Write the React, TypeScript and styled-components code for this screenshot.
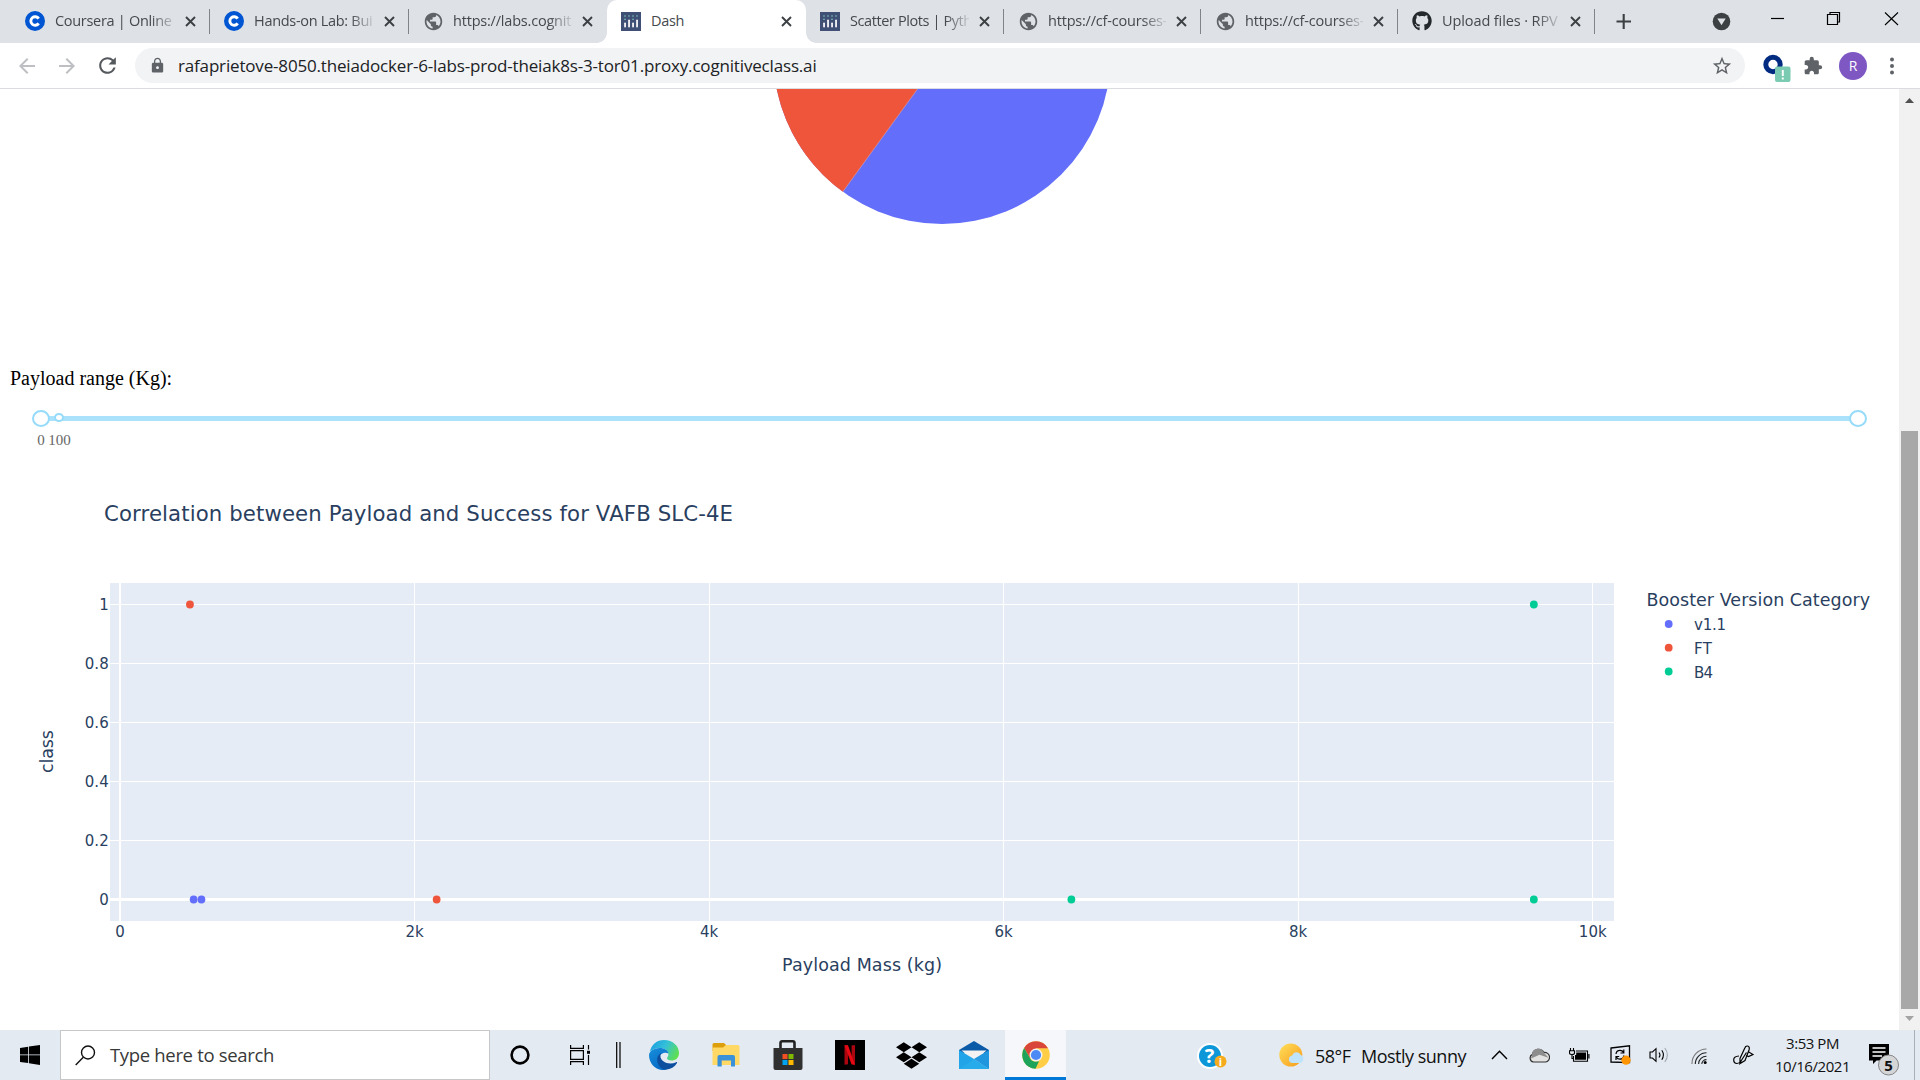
import React from "react";
import styled, { createGlobalStyle } from "styled-components";
import {
  MdArrowBack,
  MdArrowForward,
  MdRefresh,
  MdLock,
  MdStarBorder,
  MdExtension,
  MdPublic,
} from "react-icons/md";
import { FaGithub, FaDropbox } from "react-icons/fa";

const GlobalStyle = createGlobalStyle`
  * { box-sizing: border-box; }
  html, body { margin: 0; padding: 0; overflow: hidden; background: #fff; }
  svg { display: block; flex: none; }
`;

const uiFont = `"Open Sans", "Noto Sans", sans-serif`;
const plotFont = `"DejaVu Sans", Verdana, sans-serif`;

const Screen = styled.div`
  width: 1920px;
  height: 1080px;
  display: flex;
  flex-direction: column;
  overflow: hidden;
  font-family: ${uiFont};
`;

/* ---------- Tab strip ---------- */

const TabStrip = styled.div`
  height: 43px;
  display: flex;
  padding-left: 11px;
  background: #dee1e6;
`;

const Tab = styled.div<{ $width: number; $active?: boolean; $divider?: boolean }>`
  position: relative;
  width: ${(p) => p.$width}px;
  height: 43px;
  display: flex;
  align-items: center;
  padding: 0 14px 1px 14px;
  border-radius: ${(p) => (p.$active ? "10px 10px 0 0" : "0")};
  background: ${(p) => (p.$active ? "#fff" : "transparent")};
  &::before,
  &::after {
    content: "";
    display: ${(p) => (p.$active ? "block" : "none")};
    position: absolute;
    bottom: 0;
    width: 10px;
    height: 10px;
  }
  &::before {
    left: -10px;
    background: radial-gradient(circle at 0 0, transparent 9.5px, #fff 10px);
  }
  &::after {
    right: -10px;
    background: radial-gradient(circle at 100% 0, transparent 9.5px, #fff 10px);
  }
`;

const TabDivider = styled.span`
  position: absolute;
  right: 0;
  top: 9px;
  width: 1px;
  height: 25px;
  background: #808387;
`;

const Favicon = styled.span`
  width: 20px;
  display: flex;
  justify-content: center;
  color: #5f6368;
`;

const TabTitle = styled.span<{ $fade?: boolean; $spacing: number }>`
  flex: 1;
  min-width: 0;
  margin-left: 10px;
  margin-right: 10px;
  white-space: nowrap;
  font-size: 14.5px;
  line-height: 20px;
  letter-spacing: ${(p) => p.$spacing}px;
  color: #45494d;
  mask-image: ${(p) => (p.$fade ? "linear-gradient(to right, #000 80%, transparent 103%)" : "none")};
`;

const WindowControls = styled.div`
  flex: 1;
  height: 43px;
`;

/* ---------- Toolbar ---------- */

const Toolbar = styled.div`
  height: 46px;
  display: flex;
  align-items: center;
  padding-left: 15px;
  background: #fff;
  border-bottom: 1px solid #dadce0;
`;

const NavIcon = styled.span<{ $disabled?: boolean }>`
  width: 40px;
  display: flex;
  color: ${(p) => (p.$disabled ? "#bdbfc2" : "#55585c")};
`;

const Omnibox = styled.div`
  width: 1610px;
  height: 35px;
  border-radius: 18px;
  display: flex;
  align-items: center;
  padding: 0 12px 0 14px;
  background: #f1f3f4;
  color: #5f6368;
`;

const Url = styled.span`
  flex: 1;
  margin-left: 12px;
  font-size: 17px;
  line-height: 24px;
  letter-spacing: -0.17px;
  white-space: nowrap;
  color: #202124;
`;

const Extensions = styled.div`
  flex: 1;
  display: flex;
  align-items: center;
  padding-left: 18px;
  color: #5f6368;
`;

const PuzzleIcon = styled(MdExtension)`
  margin-left: 10px;
`;

const Avatar = styled.span`
  width: 28px;
  height: 28px;
  margin: 0 18px 0 16px;
  border-radius: 50%;
  background: #7e57c2;
  color: #fff;
  font-size: 14px;
  line-height: 28px;
  text-align: center;
`;

/* ---------- Page ---------- */

const Viewport = styled.div`
  height: 941px;
  display: flex;
`;

const Page = styled.main`
  width: 1899px;
  display: flex;
  flex-direction: column;
  overflow: hidden;
  background: #fff;
`;

const PieArea = styled.div`
  height: 276px;
  display: flex;
`;

const RangeLabel = styled.p`
  margin: 0;
  padding-left: 10px;
  height: 51px;
  font-family: "Liberation Serif", "Times New Roman", serif;
  font-size: 20px;
  line-height: 26px;
  color: #000;
`;

const Slider = styled.div`
  position: relative;
  height: 51px;
  margin: 0 41px 0 41px;
`;

const Rail = styled.div`
  position: absolute;
  left: 0;
  right: 0;
  top: 0;
  height: 5px;
  border-radius: 3px;
  background: #abe2fb;
`;

const Handle = styled.span<{ $x: string; $size: number; $top: number }>`
  position: absolute;
  left: ${(p) => p.$x};
  top: ${(p) => p.$top}px;
  width: ${(p) => p.$size}px;
  height: ${(p) => p.$size - 1}px;
  transform: translateX(-50%);
  border: 2px solid #96dbfa;
  border-radius: 50%;
  background: #fff;
`;

const Mark = styled.span<{ $x: number }>`
  position: absolute;
  left: ${(p) => p.$x}px;
  top: 15px;
  transform: translateX(-50%);
  font-family: "Liberation Serif", "Times New Roman", serif;
  font-size: 15px;
  line-height: 18px;
  color: #666;
`;

const Scrollbar = styled.div`
  width: 21px;
  display: flex;
  flex-direction: column;
  align-items: center;
  background: #f1f1f1;
`;

const ScrollArrow = styled.div<{ $down?: boolean }>`
  height: 21px;
  display: flex;
  align-items: center;
  padding-top: 2px;
  transform: ${(p) => (p.$down ? "rotate(180deg)" : "none")};
  color: ${(p) => (p.$down ? "#a3a3a3" : "#505050")};
`;

const ScrollThumb = styled.div`
  width: 17px;
  height: 579px;
  margin-top: 321px;
  background: #a8a8a8;
`;

/* ---------- Taskbar ---------- */

const Taskbar = styled.div`
  height: 50px;
  display: flex;
  background: #e4eaf2;
`;

const Slot = styled.div<{ $width: number; $active?: boolean; $drop?: number }>`
  width: ${(p) => p.$width}px;
  height: 50px;
  display: flex;
  align-items: center;
  justify-content: center;
  padding-top: ${(p) => p.$drop ?? 0}px;
  background: ${(p) => (p.$active ? "#f5f7fa" : "transparent")};
  border-top: ${(p) => (p.$active ? "3px solid #f5f7fa" : "none")};
  border-bottom: ${(p) => (p.$active ? "3px solid #0078d7" : "none")};
`;

const SearchBox = styled.div`
  width: 430px;
  height: 50px;
  display: flex;
  align-items: center;
  padding-left: 14px;
  border: 1px solid #c6c7c8;
  background: #fff;
`;

const SearchText = styled.span`
  margin-left: 14px;
  font-size: 18.5px;
  line-height: 26px;
  letter-spacing: -0.33px;
  color: #383838;
`;

const Weather = styled.div`
  width: 246px;
  display: flex;
  align-items: center;
  padding-left: 51px;
  font-size: 18px;
  letter-spacing: -0.5px;
  white-space: nowrap;
  color: #111;
`;

const Temperature = styled.span`
  width: 46px;
  margin-left: 11px;
  margin-top: 2px;
`;

const Condition = styled.span`
  margin-top: 2px;
`;

const Clock = styled.div`
  width: 83px;
  display: flex;
  flex-direction: column;
  align-items: center;
  padding-top: 2px;
  font-size: 15px;
  line-height: 23px;
  letter-spacing: -0.45px;
  white-space: nowrap;
  color: #111;
`;

const Spacer = styled.div`
  flex: 1;
`;

const PeekEdge = styled.div`
  width: 6px;
  border-left: 1px solid #a9b0ba;
`;

/* ---------- Drawings ---------- */

const CourseraIcon = () => (
  <svg width="20" height="20" viewBox="0 0 20 20">
    <circle cx="10" cy="10" r="10" fill="#0056d2" />
    <path d="M13.7 7.6A4.3 4.3 0 1 0 13.7 12.4" fill="none" stroke="#fff" strokeWidth="2.9" />
  </svg>
);

const PlotlyIcon = () => (
  <svg width="20" height="19" viewBox="0 0 20 19">
    <rect width="20" height="19" fill="#3f4f75" />
    {[4, 8, 12, 16].map((x, i) => (
      <g key={x}>
        <rect x={x - 0.8} y={i % 2 ? 7.5 : 10.5} width="1.7" height={i % 2 ? 8 : 5} rx="0.8" fill="#fff" />
        <circle cx={x} cy="4" r="0.8" fill="#80cfbe" />
        {i % 2 === 0 && <circle cx={x} cy="7.2" r="0.8" fill="#80cfbe" />}
      </g>
    ))}
  </svg>
);

const CloseIcon = () => (
  <svg width="11" height="11" viewBox="0 0 11 11">
    <path d="M1 1L10 10M10 1L1 10" stroke="#3c4043" strokeWidth="1.9" />
  </svg>
);

const ControlsDrawing = () => (
  <svg width="325" height="43" viewBox="1595 0 325 43">
    <path d="M1616.5 21.5H1631M1623.7 14V29" stroke="#3c4043" strokeWidth="2.1" />
    <circle cx="1721.5" cy="21.5" r="8.8" fill="#3c4043" />
    <path d="M1717.3 18.5H1725.7L1721.5 25.2Z" fill="#dee1e6" />
    <path d="M1771 18.5H1784" stroke="#000" strokeWidth="1.2" />
    <path d="M1827.5 14.5H1837.5V24.5H1827.5ZM1830 14.5V12.5H1839.5V22H1837.5" fill="none" stroke="#000" strokeWidth="1.2" />
    <path d="M1885 12.5L1898 25M1898 12.5L1885 25" stroke="#000" strokeWidth="1.1" />
  </svg>
);

const ExtensionBadge = () => (
  <svg width="30" height="32" viewBox="0 0 30 32">
    <circle cx="10" cy="14.5" r="7.2" fill="none" stroke="#002b80" strokeWidth="5" />
    <rect x="12" y="16.5" width="15.5" height="15.5" rx="2" fill="#7bcbb3" />
    <path d="M19.8 20V26M19.8 27.5V29.5" stroke="#fff" strokeWidth="1.9" />
  </svg>
);

const PieDrawing = () => {
  const cx = 942;
  const cy = -33.7;
  const r = 168.7;
  const a = Math.PI / 5;
  const ex = cx - r * Math.sin(a);
  const ey = cy + r * Math.cos(a);
  return (
    <svg width="1899" height="140" viewBox="0 0 1899 140">
      <circle cx={cx} cy={cy} r={r} fill="#636efa" />
      <path d={`M${cx} ${cy}L${ex} ${ey}A${r} ${r} 0 0 1 ${cx} ${cy - r}Z`} fill="#ef553b" />
      <path d={`M${cx} ${cy}L${ex} ${ey}`} stroke="#d6a3b4" strokeWidth="0.6" />
    </svg>
  );
};

type Point = { x: number; y: number; color: string };

const BLUE = "#636efa";
const RED = "#ef553b";
const GREEN = "#00cc96";

const points: Point[] = [
  { x: 500, y: 0, color: BLUE },
  { x: 553, y: 0, color: BLUE },
  { x: 475, y: 1, color: RED },
  { x: 2150, y: 0, color: RED },
  { x: 6460, y: 0, color: GREEN },
  { x: 9600, y: 0, color: GREEN },
  { x: 9600, y: 1, color: GREEN },
];

const legend = [
  { name: "v1.1", color: BLUE, y: 624, w: 32 },
  { name: "FT", color: RED, y: 647.7, w: 18 },
  { name: "B4", color: GREEN, y: 671.5, w: 19 },
];

const px = (v: number) => 120 + (v / 2000) * 294.55;
const py = (v: number) => 899.5 - v * 295;

const PlotText = styled.text`
  font-family: ${plotFont};
  fill: #2a3f5f;
  white-space: pre;
`;

const ScatterPlot = () => (
  <svg width="1899" height="563" viewBox="0 467 1899 563">
    <PlotText x="104" y="521" fontSize="21.25" textLength="629">
      Correlation between Payload and Success for VAFB SLC-4E
    </PlotText>
    <rect x="110" y="583" width="1504" height="338" fill="#e5ecf6" />
    {[2, 4, 6, 8, 10].map((k) => (
      <rect key={k} x={Math.round(px(k * 1000) - 0.5)} y="583" width="1" height="338" fill="#fff" />
    ))}
    {[0.2, 0.4, 0.6, 0.8, 1].map((v) => (
      <rect key={v} x="110" y={Math.round(py(v) - 0.5)} width="1504" height="1" fill="#fff" />
    ))}
    <rect x="119" y="583" width="2" height="338" fill="#fff" />
    <rect x="110" y="898" width="1504" height="3" fill="#fff" />
    {points.map((p) => (
      <circle key={`${p.x}-${p.y}`} cx={px(p.x)} cy={py(p.y)} r="3.9" fill={p.color} />
    ))}
    {[0, 0.2, 0.4, 0.6, 0.8, 1].map((v) => (
      <PlotText key={v} x="108.7" y={py(v) + 5.6} fontSize="15" textAnchor="end">
        {v}
      </PlotText>
    ))}
    {[0, 2, 4, 6, 8, 10].map((k) => (
      <PlotText key={k} x={px(k * 1000)} y="937" fontSize="15" textAnchor="middle">
        {k === 0 ? "0" : `${k}k`}
      </PlotText>
    ))}
    <PlotText x="782" y="971" fontSize="17.5" textLength="160">
      Payload Mass (kg)
    </PlotText>
    <PlotText transform="translate(53 773) rotate(-90)" fontSize="17.5" textLength="43">
      class
    </PlotText>
    <PlotText x="1646.5" y="606" fontSize="17.5" textLength="223.5">
      Booster Version Category
    </PlotText>
    {legend.map((l) => (
      <g key={l.name}>
        <circle cx="1668.7" cy={l.y} r="3.9" fill={l.color} />
        <PlotText x="1694" y={l.y + 6} fontSize="15" textLength={l.w}>
          {l.name}
        </PlotText>
      </g>
    ))}
  </svg>
);

const TriangleUp = () => (
  <svg width="9" height="5" viewBox="0 0 9 5">
    <path d="M0 5L4.5 0L9 5Z" fill="currentColor" />
  </svg>
);

const StartIcon = () => (
  <svg width="20" height="20" viewBox="0 0 20 20">
    <path d="M0 2.9L8.2 1.7V9.4H0ZM9 1.5L20 0V9.4H9ZM0 10.3H8.2V18.1L0 17ZM9 10.3H20V20L9 18.3Z" />
  </svg>
);

const SearchIcon = () => (
  <svg width="21" height="21" viewBox="0 0 21 21" fill="none" stroke="#111" strokeWidth="1.4">
    <circle cx="13" cy="7.5" r="6.5" />
    <path d="M8.3 12.2L0.7 20" />
  </svg>
);

const CortanaIcon = () => (
  <svg width="20" height="20" viewBox="0 0 20 20">
    <circle cx="10" cy="10" r="8.4" fill="none" stroke="#000" strokeWidth="2.6" />
  </svg>
);

const TaskViewIcon = () => (
  <svg width="21" height="20" viewBox="0 0 21 20" fill="none" stroke="#000" strokeWidth="1.2">
    <path d="M0.6 0V3.4H13.4V0M0.6 5.6H13.4V14.4H0.6ZM0.6 20V16.6H13.4V20M18.5 0V4.5M18.5 10V20" />
    <path d="M17 5.8H20V8.8H17Z" fill="#000" stroke="none" />
  </svg>
);

const BarsIcon = () => (
  <svg width="5" height="26" viewBox="0 0 5 26">
    <path d="M0.7 0V26M4 0V26" stroke="#000" strokeWidth="1.2" />
  </svg>
);

const EdgeIcon = () => (
  <svg width="30" height="30" viewBox="0 0 30 30">
    <defs>
      <linearGradient id="edgeTop" x1="0" x2="1" y1="0.2" y2="0.6">
        <stop offset="0" stopColor="#1a9fe0" />
        <stop offset="0.5" stopColor="#35c1d8" />
        <stop offset="1" stopColor="#5fe04f" />
      </linearGradient>
      <linearGradient id="edgeSide" x1="0" x2="0.6" y1="0" y2="1">
        <stop offset="0" stopColor="#1790dc" />
        <stop offset="1" stopColor="#0768c4" />
      </linearGradient>
    </defs>
    <path d="M1 12C2 4.5 8 0 15 0C24 0 30 6 30 13C30 18 26.5 20.5 22.5 20.5C19.5 20.5 18 19.3 18 18.2C18 17 19.4 16.8 19.4 14.2C19.4 10.6 15.5 8 10.7 8C6 8 2.5 9.8 1 12Z" fill="url(#edgeTop)" />
    <path d="M0 15C.5 11 5 8 10.7 8C15.5 8 19.4 10.6 19.4 13.6C17 11.6 11 13 10 18C9 24 13 28.5 18 29.6C8 32 0 24.5 0 15Z" fill="url(#edgeSide)" />
    <path d="M12.5 12.6C9 14.5 7.6 18 8.3 21.5C9.4 26.6 13 29.8 18 29.6C22 29 26 26.5 28 23C28.4 22.3 28 21.8 27.2 22.2C20 25.4 11.4 22 11.4 15.7C11.4 14.4 11.8 13.4 12.5 12.6Z" fill="#0d4f9e" />
  </svg>
);

const FolderIcon = () => (
  <svg width="28" height="24" viewBox="0 0 28 24">
    <path d="M0.5 1.5Q0.5 0 2 0H12L14 2V8H0.5Z" fill="#dd9f0c" />
    <path d="M0.5 4.5H11L14 2H26Q27.5 2 27.5 3.5V22H0.5Z" fill="#ffd865" />
    <path d="M5.5 23.5V14Q5.5 12 7.5 12H21Q23 12 23 14V23.5H19V17.5H9.7V23.5Z" fill="#3a91d8" />
  </svg>
);

const StoreIcon = () => (
  <svg width="30" height="30" viewBox="0 0 30 30">
    <path d="M7.5 8V3Q7.5 1.3 9.2 1.3H19.8Q21.5 1.3 21.5 3V8" fill="none" stroke="#222" strokeWidth="2.6" />
    <path d="M0.5 8H29.5V28Q29.5 30 27.5 30H2.5Q0.5 30 0.5 28Z" fill="#303030" />
    <rect x="9.5" y="14" width="5" height="5" fill="#f25022" />
    <rect x="15.5" y="14" width="5" height="5" fill="#7fba00" />
    <rect x="9.5" y="20" width="5" height="5" fill="#00a4ef" />
    <rect x="15.5" y="20" width="5" height="5" fill="#ffb900" />
  </svg>
);

const NetflixIcon = () => (
  <svg width="30" height="30" viewBox="0 0 30 30">
    <rect width="30" height="30" fill="#000" />
    <path d="M9.5 5.3H13V24.3L9.5 24.7ZM16.6 5.3H20V24.7L16.6 24.3Z" fill="#a90610" />
    <path d="M9.5 5.3H13L20 24.7L16.5 24.3Z" fill="#e50914" />
  </svg>
);

const MailIcon = () => (
  <svg width="30" height="28" viewBox="0 0 30 28">
    <path d="M0 9L15 0L30 9V12H0Z" fill="#0a5aa8" />
    <path d="M2.5 9.5H27.5L15 20Z" fill="#f3f3f3" />
    <path d="M0 9L15 18L30 28H0Z" fill="#22a5e8" />
    <path d="M30 9V28L15 18Z" fill="#1585d5" />
    <path d="M0 28L30 9V28Z" fill="#33b6ef" opacity="0.35" />
  </svg>
);

const ChromeIcon = () => (
  <svg width="28" height="28" viewBox="0 0 28 28">
    <circle cx="14" cy="14" r="13.8" fill="#ffcd46" />
    <path d="M14 14L8.2 17.3L2.1 7Q6 .2 14 .2Q22 .2 26 7.3H14Z" fill="#d9473b" />
    <path d="M2.1 7L8.2 17.4Q10 20.6 14 20.6L17 20.2L13.5 27.8A13.8 13.8 0 0 1 2.1 7Z" fill="#1da35a" />
    <circle cx="14" cy="14" r="6.5" fill="#f3f3f3" />
    <circle cx="14" cy="14" r="5.1" fill="#4c8bf5" />
  </svg>
);

const HelpMark = styled.text`
  font-family: ${uiFont};
  font-weight: 700;
  text-anchor: middle;
`;

const HelpIcon = () => (
  <svg width="31" height="30" viewBox="0 0 31 30">
    <circle cx="13" cy="14" r="13" fill="#fff" />
    <circle cx="13" cy="14" r="11" fill="#0d97d8" />
    <HelpMark x="12.5" y="21.3" fontSize="20" fill="#fff">?</HelpMark>
    <circle cx="23.5" cy="19.5" r="6" fill="#f5ab1d" />
    <HelpMark x="23.5" y="23.5" fontSize="11" fill="#fff">i</HelpMark>
  </svg>
);

const WeatherIcon = () => (
  <svg width="25" height="25" viewBox="0 0 25 25">
    <defs>
      <linearGradient id="sun" x1="0" x2="1" y1="0" y2="1">
        <stop offset="0" stopColor="#ffe05a" />
        <stop offset="1" stopColor="#f79a1b" />
      </linearGradient>
    </defs>
    <circle cx="11.8" cy="12" r="11.5" fill="url(#sun)" />
    <path d="M13 20a3.8 3.8 0 0 1 .2-7.5A4.6 4.6 0 0 1 21.8 12A4.2 4.2 0 0 1 21 20Z" fill="#bfe3fb" />
  </svg>
);

const ChevronIcon = () => (
  <svg width="17" height="10" viewBox="0 0 17 10">
    <path d="M1 9L8.5 1.2L16 9" fill="none" stroke="#000" strokeWidth="1.4" />
  </svg>
);

const CloudIcon = () => (
  <svg width="21" height="15" viewBox="0 0 21 15">
    <path d="M4.5 14A4 4 0 0 1 3.5 6.4A6.2 6.2 0 0 1 15 4.5A4.8 4.8 0 0 1 16.5 14Z" fill="#e2e2e2" stroke="#333" strokeWidth="1.2" />
    <path d="M3 7A6.2 6.2 0 0 1 15 4.7L19.5 9.7L10.5 6.8L2 10.5Z" fill="#8d8d8d" />
  </svg>
);

const BatteryIcon = () => (
  <svg width="21" height="15" viewBox="0 0 21 15">
    <path d="M1.5 0V2.5M4.5 0V2.5M0.5 2.7H5.5V5Q5.5 6.5 3 6.5Q0.5 6.5 0.5 5ZM3 6.5V10.5H4.5" fill="none" stroke="#000" strokeWidth="1.1" />
    <path d="M7 3H18.5V13.3H4.5V8" fill="none" stroke="#000" strokeWidth="1.1" />
    <path d="M7.2 4.5H17V11.8H6V7H7.2ZM19.3 6H20.5V10.5H19.3Z" />
  </svg>
);

const UpdateIcon = () => (
  <svg width="21" height="20" viewBox="0 0 21 20">
    <path d="M1 3L19.5 0.8V17.6L1 17Z" fill="none" stroke="#000" strokeWidth="1.3" />
    <path d="M6 9Q6.5 5.4 10 5.4Q12.5 5.4 13.5 7.5M13.8 4.5V8H10.5M14 10.5Q13 14.2 9.8 14.2Q7.5 14.2 6.5 12M6 15V11.5H9.2" fill="none" stroke="#000" strokeWidth="1.2" />
    <circle cx="16" cy="15.2" r="4.6" fill="#ff9500" />
  </svg>
);

const VolumeIcon = () => (
  <svg width="21" height="18" viewBox="0 0 21 18" fill="none" stroke="#000" strokeWidth="1.1">
    <path d="M1 6H3.5L7 2.7V15.3L3.5 12H1Z" />
    <path d="M10 6.5Q12 9 10 11.5M12.8 4.3Q16 9 12.8 13.7" />
    <path d="M15.8 2Q21 9 15.8 16" stroke="#a2a8b0" />
  </svg>
);

const WifiIcon = () => (
  <svg width="16" height="16" viewBox="0 0 16 16" fill="none" stroke="#222" strokeWidth="1.1">
    <path d="M1 16A14.5 14.5 0 0 1 15.5 1" stroke="#777" />
    <path d="M4.3 16A11.2 11.2 0 0 1 15.5 4.8M7.6 16A7.9 7.9 0 0 1 15.5 8.2M10.8 16A4.7 4.7 0 0 1 15.5 11.6" />
    <circle cx="14.2" cy="14.5" r="1.5" fill="#000" stroke="none" />
  </svg>
);

const PenIcon = () => (
  <svg width="21" height="20" viewBox="0 0 21 20" fill="none" stroke="#000" strokeWidth="1.2">
    <path d="M6 11Q0.7 11.3 0.7 14.8Q0.7 18.5 4 18.5Q6.5 18.5 8 16L13.5 7.5M8 16L7 18.5L12 15.5L16 5Q17 1.5 14.5 1Q12.5 0.8 11.8 3L7 13.5V18.5M15 6.5L20 9.5L15.5 11.5L13.2 10.5" />
  </svg>
);

const NotificationIcon = () => (
  <svg width="33" height="36" viewBox="0 0 33 36">
    <path d="M1 3H21V19.5H8.5L5 23V19.5H1Z" />
    <path d="M4.5 7H17.5M4.5 11H17.5M4.5 15H14" stroke="#fff" strokeWidth="1.3" />
    <circle cx="20.5" cy="24" r="10" fill="#d4d5d7" stroke="#858585" strokeWidth="1" />
    <HelpMark x="20.5" y="29.5" fontSize="15" fill="#111">5</HelpMark>
  </svg>
);

/* ---------- Composition ---------- */

const tabs = [
  { title: "Coursera | Online", icon: "coursera", width: 199, divider: true, spacing: -0.3 },
  { title: "Hands-on Lab: Bui", icon: "coursera", width: 199, divider: true, spacing: -0.3 },
  { title: "https://labs.cognit", icon: "globe", width: 198, spacing: -0.2 },
  { title: "Dash", icon: "plotly", width: 199, active: true, spacing: -0.3 },
  { title: "Scatter Plots | Pyth", icon: "plotly", width: 198, divider: true, spacing: -0.4 },
  { title: "https://cf-courses-", icon: "globe", width: 197, divider: true, spacing: -0.2 },
  { title: "https://cf-courses-", icon: "globe", width: 197, divider: true, spacing: -0.2 },
  { title: "Upload files · RPV", icon: "github", width: 197, divider: true, spacing: -0.1 },
];

const faviconFor = (name: string) => {
  if (name === "coursera") return <CourseraIcon />;
  if (name === "plotly") return <PlotlyIcon />;
  if (name === "github") return <FaGithub size={20} color="#24292e" />;
  return <MdPublic size={21} />;
};

export default function App() {
  return (
    <Screen>
      <GlobalStyle />
      <TabStrip>
        {tabs.map((t, i) => (
          <Tab key={i} $width={t.width} $active={t.active}>
            <Favicon>{faviconFor(t.icon)}</Favicon>
            <TabTitle $fade={!t.active} $spacing={t.spacing}>
              {t.title}
            </TabTitle>
            <CloseIcon />
            {t.divider && <TabDivider />}
          </Tab>
        ))}
        <WindowControls>
          <ControlsDrawing />
        </WindowControls>
      </TabStrip>

      <Toolbar>
        <NavIcon $disabled>
          <MdArrowBack size={24} />
        </NavIcon>
        <NavIcon $disabled>
          <MdArrowForward size={24} />
        </NavIcon>
        <NavIcon>
          <MdRefresh size={25} />
        </NavIcon>
        <Omnibox>
          <MdLock size={17} />
          <Url>rafaprietove-8050.theiadocker-6-labs-prod-theiak8s-3-tor01.proxy.cognitiveclass.ai</Url>
          <MdStarBorder size={22} />
        </Omnibox>
        <Extensions>
          <ExtensionBadge />
          <PuzzleIcon size={20} />
          <Avatar>R</Avatar>
          <svg width="20" height="18" viewBox="0 0 20 18" fill="#5f6368">
            <circle cx="7" cy="2.5" r="2" />
            <circle cx="7" cy="9" r="2" />
            <circle cx="7" cy="15.5" r="2" />
          </svg>
        </Extensions>
      </Toolbar>

      <Viewport>
        <Page>
          <PieArea>
            <PieDrawing />
          </PieArea>
          <RangeLabel>Payload range (Kg):</RangeLabel>
          <Slider>
            <Rail />
            <Handle $x="18px" $size={10} $top={-3} />
            <Handle $x="0px" $size={18} $top={-6} />
            <Handle $x="100%" $size={18} $top={-6} />
            <Mark $x={0}>0</Mark>
            <Mark $x={18.5}>100</Mark>
          </Slider>
          <ScatterPlot />
        </Page>
        <Scrollbar>
          <ScrollArrow>
            <TriangleUp />
          </ScrollArrow>
          <ScrollThumb />
          <ScrollArrow $down>
            <TriangleUp />
          </ScrollArrow>
        </Scrollbar>
      </Viewport>

      <Taskbar>
        <Slot $width={60}>
          <StartIcon />
        </Slot>
        <SearchBox>
          <SearchIcon />
          <SearchText>Type here to search</SearchText>
        </SearchBox>
        <Slot $width={60}>
          <CortanaIcon />
        </Slot>
        <Slot $width={60}>
          <TaskViewIcon />
        </Slot>
        <Slot $width={16}>
          <BarsIcon />
        </Slot>
        <Slot $width={75}>
          <EdgeIcon />
        </Slot>
        <Slot $width={49}>
          <FolderIcon />
        </Slot>
        <Slot $width={75}>
          <StoreIcon />
        </Slot>
        <Slot $width={49}>
          <NetflixIcon />
        </Slot>
        <Slot $width={75}>
          <FaDropbox size={31} />
        </Slot>
        <Slot $width={49}>
          <MailIcon />
        </Slot>
        <Slot $width={7} />
        <Slot $width={61} $active>
          <ChromeIcon />
        </Slot>
        <Spacer />
        <Slot $width={31} $drop={4}>
          <HelpIcon />
        </Slot>
        <Weather>
          <WeatherIcon />
          <Temperature>58°F</Temperature>
          <Condition>Mostly sunny</Condition>
        </Weather>
        <Slot $width={50}>
          <ChevronIcon />
        </Slot>
        <Slot $width={30}>
          <CloudIcon />
        </Slot>
        <Slot $width={50}>
          <BatteryIcon />
        </Slot>
        <Slot $width={32}>
          <UpdateIcon />
        </Slot>
        <Slot $width={47}>
          <VolumeIcon />
        </Slot>
        <Slot $width={32} $drop={2}>
          <WifiIcon />
        </Slot>
        <Slot $width={56}>
          <PenIcon />
        </Slot>
        <Clock>
          <span>3:53 PM</span>
          <span>10/16/2021</span>
        </Clock>
        <Slot $width={60} $drop={7}>
          <NotificationIcon />
        </Slot>
        <PeekEdge />
      </Taskbar>
    </Screen>
  );
}
